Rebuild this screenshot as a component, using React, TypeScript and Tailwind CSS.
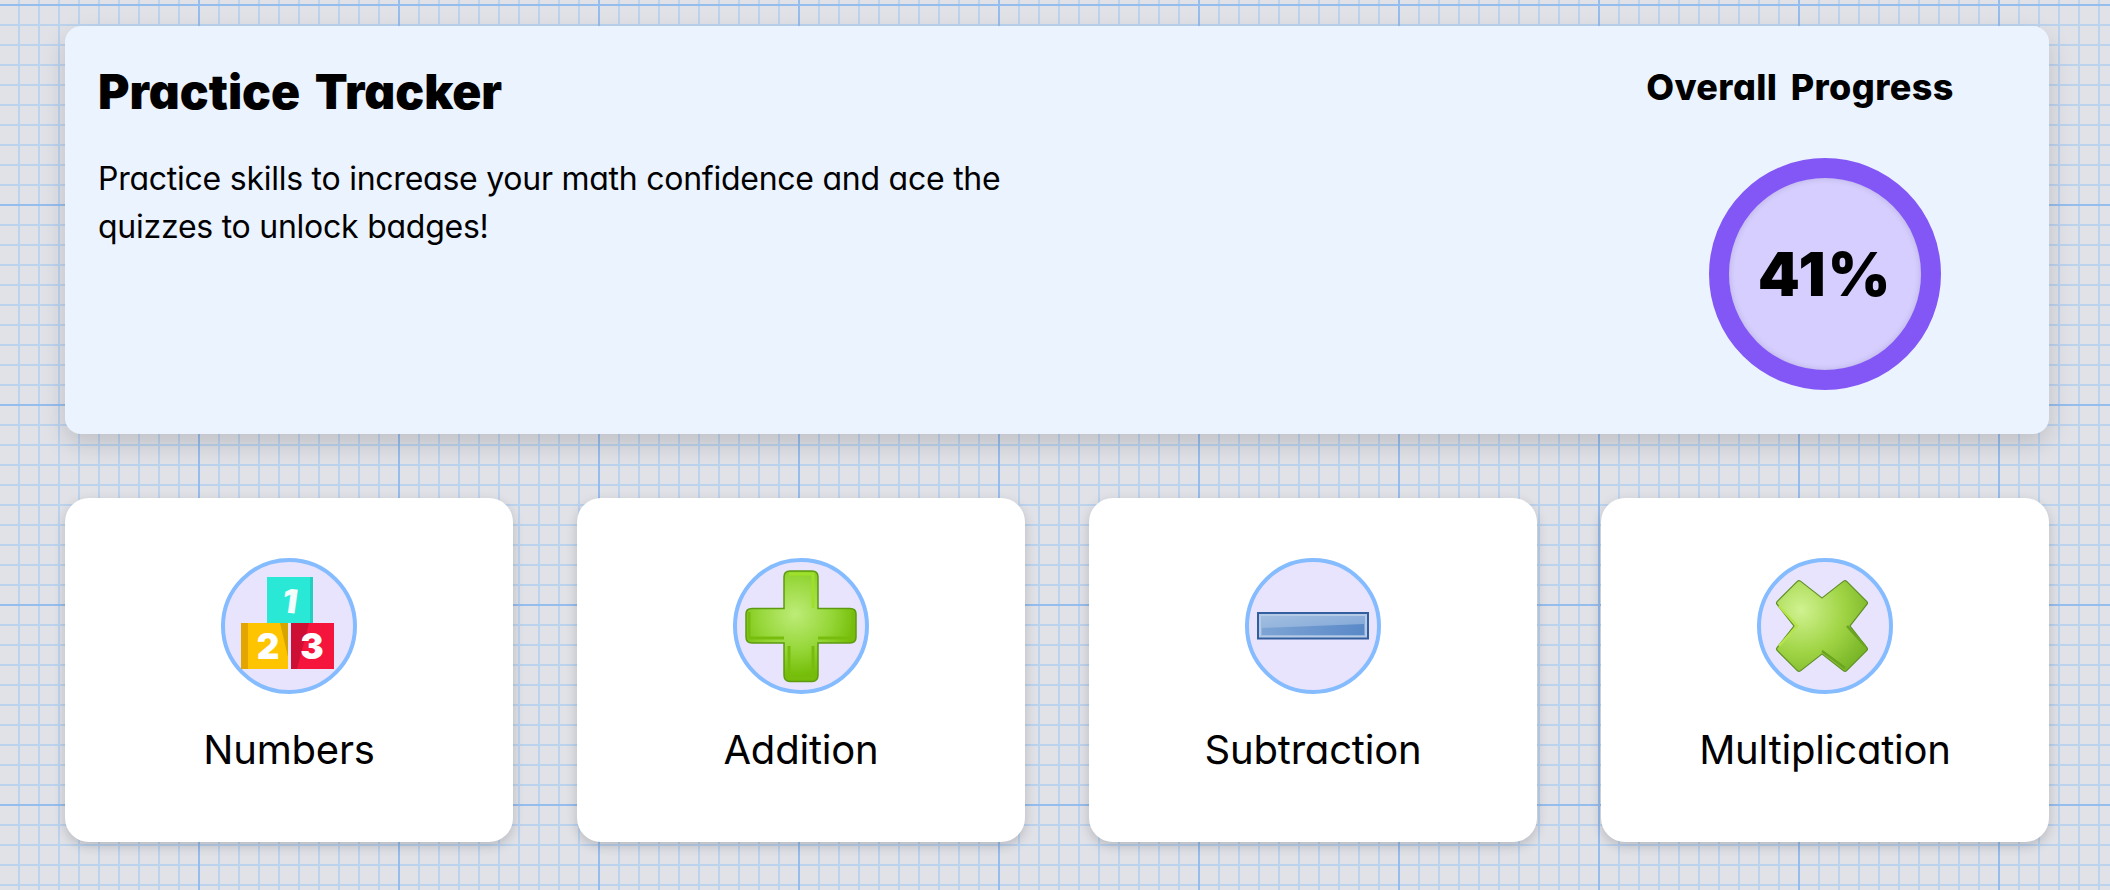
import React from "react";

const sans = "font-['Inter',sans-serif] [font-feature-settings:'cv11','ss03']";

function Blocks() {
  return (
    <svg width="128" height="128" viewBox="0 0 128 128">
      <rect x="42" y="15" width="46" height="46" fill="#2ae8d6" />
      <rect x="85" y="15" width="3" height="46" fill="#22d0c2" />
      <text x="65" y="51" textAnchor="middle" fontFamily="Inter, sans-serif" fontWeight="900" fontSize="33" fill="#f4fffd" transform="rotate(8 65 40)">1</text>
      <rect x="16" y="61" width="47" height="46" fill="#ffc400" />
      <rect x="16" y="61" width="7" height="46" fill="#e5a500" />
      <polygon points="55,61 63,61 63,95" fill="#d8a400" />
      <text x="43" y="97" textAnchor="middle" fontFamily="Inter, sans-serif" fontWeight="900" fontSize="35" fill="#fff">2</text>
      <rect x="66" y="61" width="43" height="46" fill="#f5143c" />
      <polygon points="66,61 84,61 72,107 66,107" fill="#cc0f33" />
      <text x="87" y="97" textAnchor="middle" fontFamily="Inter, sans-serif" fontWeight="900" fontSize="35" fill="#fff">3</text>
    </svg>
  );
}

function Plus() {
  const d =
    "M53 9H75Q81 9 81 15V46.5H113Q119 46.5 119 52V75Q119 81 113 81H81V113Q81 119.5 75 119.5H53Q47 119.5 47 113V81H15Q9 81 9 75V52Q9 46.5 15 46.5H47V15Q47 9 53 9Z";
  return (
    <svg width="128" height="128" viewBox="0 0 128 128">
      <defs>
        <radialGradient id="pg" gradientUnits="userSpaceOnUse" cx="58" cy="52" r="62">
          <stop offset="0" stopColor="#bdec78" />
          <stop offset="0.6" stopColor="#95d637" />
          <stop offset="1" stopColor="#74bd08" />
        </radialGradient>
      </defs>
      <path d={d} fill="url(#pg)" stroke="#5c9a10" strokeWidth="1.5" />
      <path d="M52 12H76V46" fill="none" stroke="#9fe02a" strokeWidth="3" />
      <path d="M12 50V76H47M81 76H116V50" fill="none" stroke="#78bd0e" strokeWidth="3" />
      <path d="M52 84V116H76V84" fill="none" stroke="#78bd0e" strokeWidth="3" />
    </svg>
  );
}

function Minus() {
  return (
    <svg width="128" height="128" viewBox="0 0 128 128">
      <defs>
        <linearGradient id="mg" x1="0" y1="0" x2="1" y2="1">
          <stop offset="0" stopColor="#a3bfe0" />
          <stop offset="1" stopColor="#7ba3d6" />
        </linearGradient>
        <linearGradient id="mb" x1="0" y1="0" x2="1" y2="0">
          <stop offset="0" stopColor="#7da4d4" />
          <stop offset="1" stopColor="#5a89c8" />
        </linearGradient>
      </defs>
      <rect x="9" y="51" width="110" height="25.5" fill="#345f9f" stroke="#345f9f" strokeWidth="2" />
      <rect x="11" y="53" width="106" height="21.5" fill="url(#mg)" stroke="#b5cbe6" strokeWidth="2" />
      <polygon points="13,66 115,62 115,73 13,73" fill="url(#mb)" />
    </svg>
  );
}

function Times() {
  const pts = "84,21 104,41 86,64 104,87 84,107 61,89 38,107 18,87 36,64 18,41 38,21 61,39";
  return (
    <svg width="128" height="128" viewBox="0 0 128 128">
      <defs>
        <radialGradient id="xg" gradientUnits="userSpaceOnUse" cx="40" cy="48" r="78">
          <stop offset="0" stopColor="#d0f291" />
          <stop offset="0.55" stopColor="#a0d445" />
          <stop offset="1" stopColor="#74b224" />
        </radialGradient>
      </defs>
      <polygon points={pts} fill="#5f8f26" stroke="#5f8f26" strokeWidth="6" strokeLinejoin="round" />
      <polygon points={pts} fill="url(#xg)" stroke="url(#xg)" strokeWidth="3.5" strokeLinejoin="round" />
      <path d="M18 44L36 64L18 84" fill="none" stroke="#b6e54a" strokeWidth="2.5" />
      <path d="M104 84L86 64M61 89L84 106" fill="none" stroke="#6aa51f" strokeWidth="2.5" />
    </svg>
  );
}

const skills = [
  { name: "Numbers", icon: <Blocks /> },
  { name: "Addition", icon: <Plus /> },
  { name: "Subtraction", icon: <Minus /> },
  { name: "Multiplication", icon: <Times /> },
];

export default function App() {
  return (
    <div
      className={`${sans} h-[890px] overflow-hidden bg-[#e0e2e8] text-black pl-[65px] pt-[26px] [background-image:linear-gradient(to_right,#95bdee_2px,transparent_2px),linear-gradient(to_bottom,#95bdee_2px,transparent_2px),linear-gradient(to_right,#bcd3ee_2px,transparent_2px),linear-gradient(to_bottom,#bcd3ee_2px,transparent_2px)] [background-size:200px_200px,200px_200px,20px_20px,20px_20px] [background-position:198px_0,0_4px,18px_0,0_4px]`}
    >
      <div className="w-[1984px] flex flex-col gap-[64px]">
        <section className="h-[408px] rounded-2xl bg-[#ebf3ff] shadow-[0_10px_25px_rgba(0,0,0,0.15)] flex justify-between pl-[33px] pr-[84px]">
          <div className="pt-[38px]">
            <h1 className="text-[48px] leading-[56px] font-black tracking-[0px] [word-spacing:5px]">Practice Tracker</h1>
            <p className="mt-[35px] text-[32px] leading-[48px] font-normal tracking-[-0.25px]">
              Practice skills to increase your math confidence and ace the
              <br />
              quizzes to unlock badges!
            </p>
          </div>
          <div className="flex flex-col items-center w-[280px] pt-[38px]">
            <h2 className="text-[36px] leading-[46px] font-extrabold whitespace-nowrap tracking-[0.4px] [word-spacing:5px] -ml-[50px]">Overall Progress</h2>
            <div className="mt-[48px] w-[232px] h-[232px] rounded-full border-[20px] border-[#8357f6] bg-[#d6ceff] flex items-center justify-center shadow-[inset_0_0_6px_rgba(0,0,0,0.15)]">
              <span className="text-[60px] font-black leading-none tracking-[2px]">41%</span>
            </div>
          </div>
        </section>
        <section className="grid grid-cols-4 gap-[64px]">
          {skills.map((s) => (
            <div
              key={s.name}
              className="h-[344px] rounded-3xl bg-white shadow-[0_4px_12px_rgba(0,0,0,0.18)] flex flex-col items-center pt-[60px]"
            >
              <div className="w-[136px] h-[136px] rounded-full border-4 border-[#85bbff] bg-[#e8e4fd] flex items-center justify-center">
                {s.icon}
              </div>
              <div className="mt-[32px] text-[40px] leading-[48px] font-normal tracking-[-0.2px]">{s.name}</div>
            </div>
          ))}
        </section>
      </div>
    </div>
  );
}
